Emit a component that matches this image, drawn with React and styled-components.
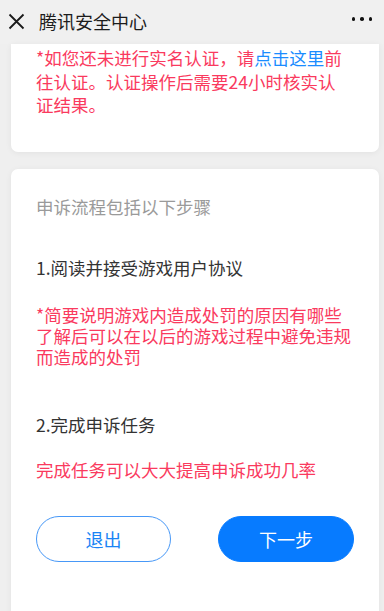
import styled, { createGlobalStyle } from 'styled-components';

const Global = createGlobalStyle`
    html, body {
        margin: 0;
        padding: 0;
        background: #efefef;
        font-family: "Noto Sans CJK SC", "Noto Sans", sans-serif;
    }
    * { box-sizing: border-box; }
`;

const Page = styled.div`
    width: 384px;
    height: 611px;
    overflow: hidden;
    background: #efefef;
`;

const Header = styled.div`
    height: 44px;
    display: flex;
    align-items: center;
    padding: 0 12px 0 8px;
    background: #f0f0f0;
`;

const Close = styled.button`
    border: none;
    background: none;
    padding: 0;
    width: 17px;
    height: 17px;
    display: flex;
    margin-top: -2px;
`;

const Title = styled.div`
    flex: 1;
    margin-left: 14px;
    font-size: 18px;
    color: #1c1c1c;
    margin-top: -3px;
`;

const More = styled.div`
    display: flex;
    gap: 5px;
    margin-top: -6px;
`;

const Dot = styled.span`
    width: 3.5px;
    height: 3.5px;
    border-radius: 50%;
    background: #111;
`;

const Card = styled.div`
    margin: ${p => p.$top}px 5px 0 11px;
    background: #fff;
    border-radius: ${p => p.$first ? '0 0 7px 7px' : '7px 7px 0 0'};
    box-shadow: 0 1px 6px rgba(0, 0, 0, 0.06);
    padding: ${p => p.$first ? '2px 28px 35px 25px' : '26px 25px 60px'};
`;

const Text = styled.p`
    margin: ${p => p.$gap || 0}px 0 0;
    font-size: 17.5px;
    line-height: ${p => p.$lh || 24}px;
    color: ${p => p.$tone === 'red' ? '#fa3a5e' : p.$tone === 'gray' ? '#9a9a9a' : '#333'};
`;

const Link = styled.span`
    color: #1a8cff;
`;

const Actions = styled.div`
    margin-top: 36px;
    display: flex;
    justify-content: space-between;
`;

const Button = styled.button`
    width: ${p => p.$primary ? 136 : 135}px;
    height: 46px;
    border-radius: 23px;
    font-family: inherit;
    font-size: 18px;
    border: 1px solid ${p => p.$primary ? '#077bff' : '#4798f7'};
    background: ${p => p.$primary ? '#077bff' : '#fff'};
    color: ${p => p.$primary ? '#fff' : '#1a84f5'};
`;

export default function App() {
    return (
        <Page>
            <Global />
            <Header>
                <Close>
                    <svg width="17" height="17" viewBox="0 0 17 17">
                        <path d="M1.5 1.5 L15.5 15.5 M15.5 1.5 L1.5 15.5" stroke="#1a1a1a" strokeWidth="1.8" fill="none" />
                    </svg>
                </Close>
                <Title>腾讯安全中心</Title>
                <More><Dot /><Dot /><Dot /></More>
            </Header>
            <Card $first $top={0}>
                <Text $tone="red" $lh={23.5}>
                    *如您还未进行实名认证，请<Link>点击这里</Link>前往认证。认证操作后需要24小时核实认证结果。
                </Text>
            </Card>
            <Card $top={17}>
                <Text $tone="gray">申诉流程包括以下步骤</Text>
                <Text $gap={37}>1.阅读并接受游戏用户协议</Text>
                <Text $tone="red" $lh={21} $gap={24}>
                    *简要说明游戏内造成处罚的原因有哪些了解后可以在以后的游戏过程中避免违规而造成的处罚
                </Text>
                <Text $gap={46}>2.完成申诉任务</Text>
                <Text $tone="red" $lh={21} $gap={22}>完成任务可以大大提高申诉成功几率</Text>
                <Actions>
                    <Button>退出</Button>
                    <Button $primary>下一步</Button>
                </Actions>
            </Card>
        </Page>
    );
}
